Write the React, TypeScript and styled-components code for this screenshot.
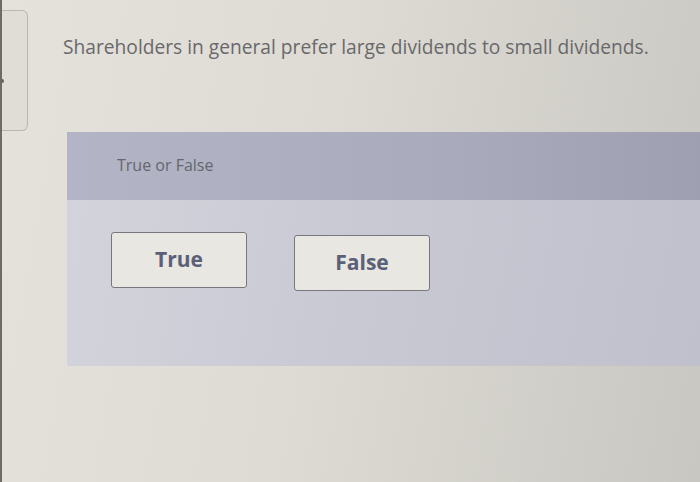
import React, { FC } from 'react'
import styled, { createGlobalStyle } from 'styled-components'

const GlobalStyle = createGlobalStyle`
  html, body {
    margin     : 0;
    padding    : 0;
    height     : 100%;
    overflow   : hidden;
  }
  body {
    background : linear-gradient(100deg, #e4e2db 0%, #dddbd4 45%, #c9c7c1 100%);
    font-family: "Open Sans", "Liberation Sans", sans-serif;
  }
`

type Choice = {
  label: string
  shift: number
}

const choices: Choice[] = [
  { label: 'True', shift: 0 },
  { label: 'False', shift: 3 },
]

const App: FC = () => {
  return (
    <>
      <GlobalStyle/>
      <Page>
        <Rail>
          <SideCard>
            <Marker/>
          </SideCard>
        </Rail>
        <Main>
          <Question>Shareholders in general prefer large dividends to small dividends.</Question>
          <Panel>
            <PanelHead>True or False</PanelHead>
            <PanelBody>
              {choices.map( c => (
                <ChoiceButton key={c.label} $shift={c.shift}>{c.label}</ChoiceButton>
              ) )}
            </PanelBody>
          </Panel>
        </Main>
      </Page>
    </>
  )
}

export default App

const Page = styled.div`
  display     : flex;
  width       : 700px;
  height      : 482px;
  overflow    : hidden;
  border-left : 2px solid #6d6c64;
  box-sizing  : border-box;
`

const Rail = styled.div`
  width       : 26px;
  flex-shrink : 0;
  padding-top : 10px;
`

const SideCard = styled.div`
  position      : relative;
  height        : 121px;
  border        : 1px solid #b9b7b0;
  border-left   : none;
  border-radius : 0 6px 6px 0;
  background    : #dfddd5;
  box-sizing    : border-box;
`

const Marker = styled.span`
  position      : absolute;
  left          : -2px;
  top           : 68px;
  width         : 4px;
  height        : 4px;
  border-radius : 50%;
  background    : #5d5c58;
`

const Main = styled.div`
  flex        : 1;
  padding     : 35px 0 0 35px;
  min-width   : 0;
`

const Question = styled.div`
  font-size   : 19.2px;
  line-height : 24px;
  color       : #69686b;
  white-space : nowrap;
`

const Panel = styled.div`
  margin      : 73px 0 0 4px;
  width       : 640px;
`

const PanelHead = styled.div`
  height      : 68px;
  display     : flex;
  align-items : center;
  padding     : 0 0 2px 50px;
  box-sizing  : border-box;
  background  : linear-gradient(90deg, #b3b5c6 0%, #a9abbc 60%, #9e9fb0 100%);
  font-size   : 16px;
  color       : #66666d;
`

const PanelBody = styled.div`
  height      : 166px;
  display     : flex;
  align-items : flex-start;
  gap         : 47px;
  padding     : 32px 0 0 44px;
  box-sizing  : border-box;
  background  : linear-gradient(100deg, #d3d4db 0%, #c9cad4 40%, #bfc0cb 100%);
`

const ChoiceButton = styled.button<{ $shift: number }>`
  width         : 136px;
  height        : 56px;
  margin-top    : ${p => p.$shift}px;
  border        : 1.5px solid #77777d;
  border-radius : 3px;
  background    : #e8e7e1;
  font-family   : "Open Sans", "Liberation Sans", sans-serif;
  font-weight   : 700;
  font-size     : 21px;
  color         : #5b6079;
  cursor        : pointer;
  padding       : 0 0 2px;
`
